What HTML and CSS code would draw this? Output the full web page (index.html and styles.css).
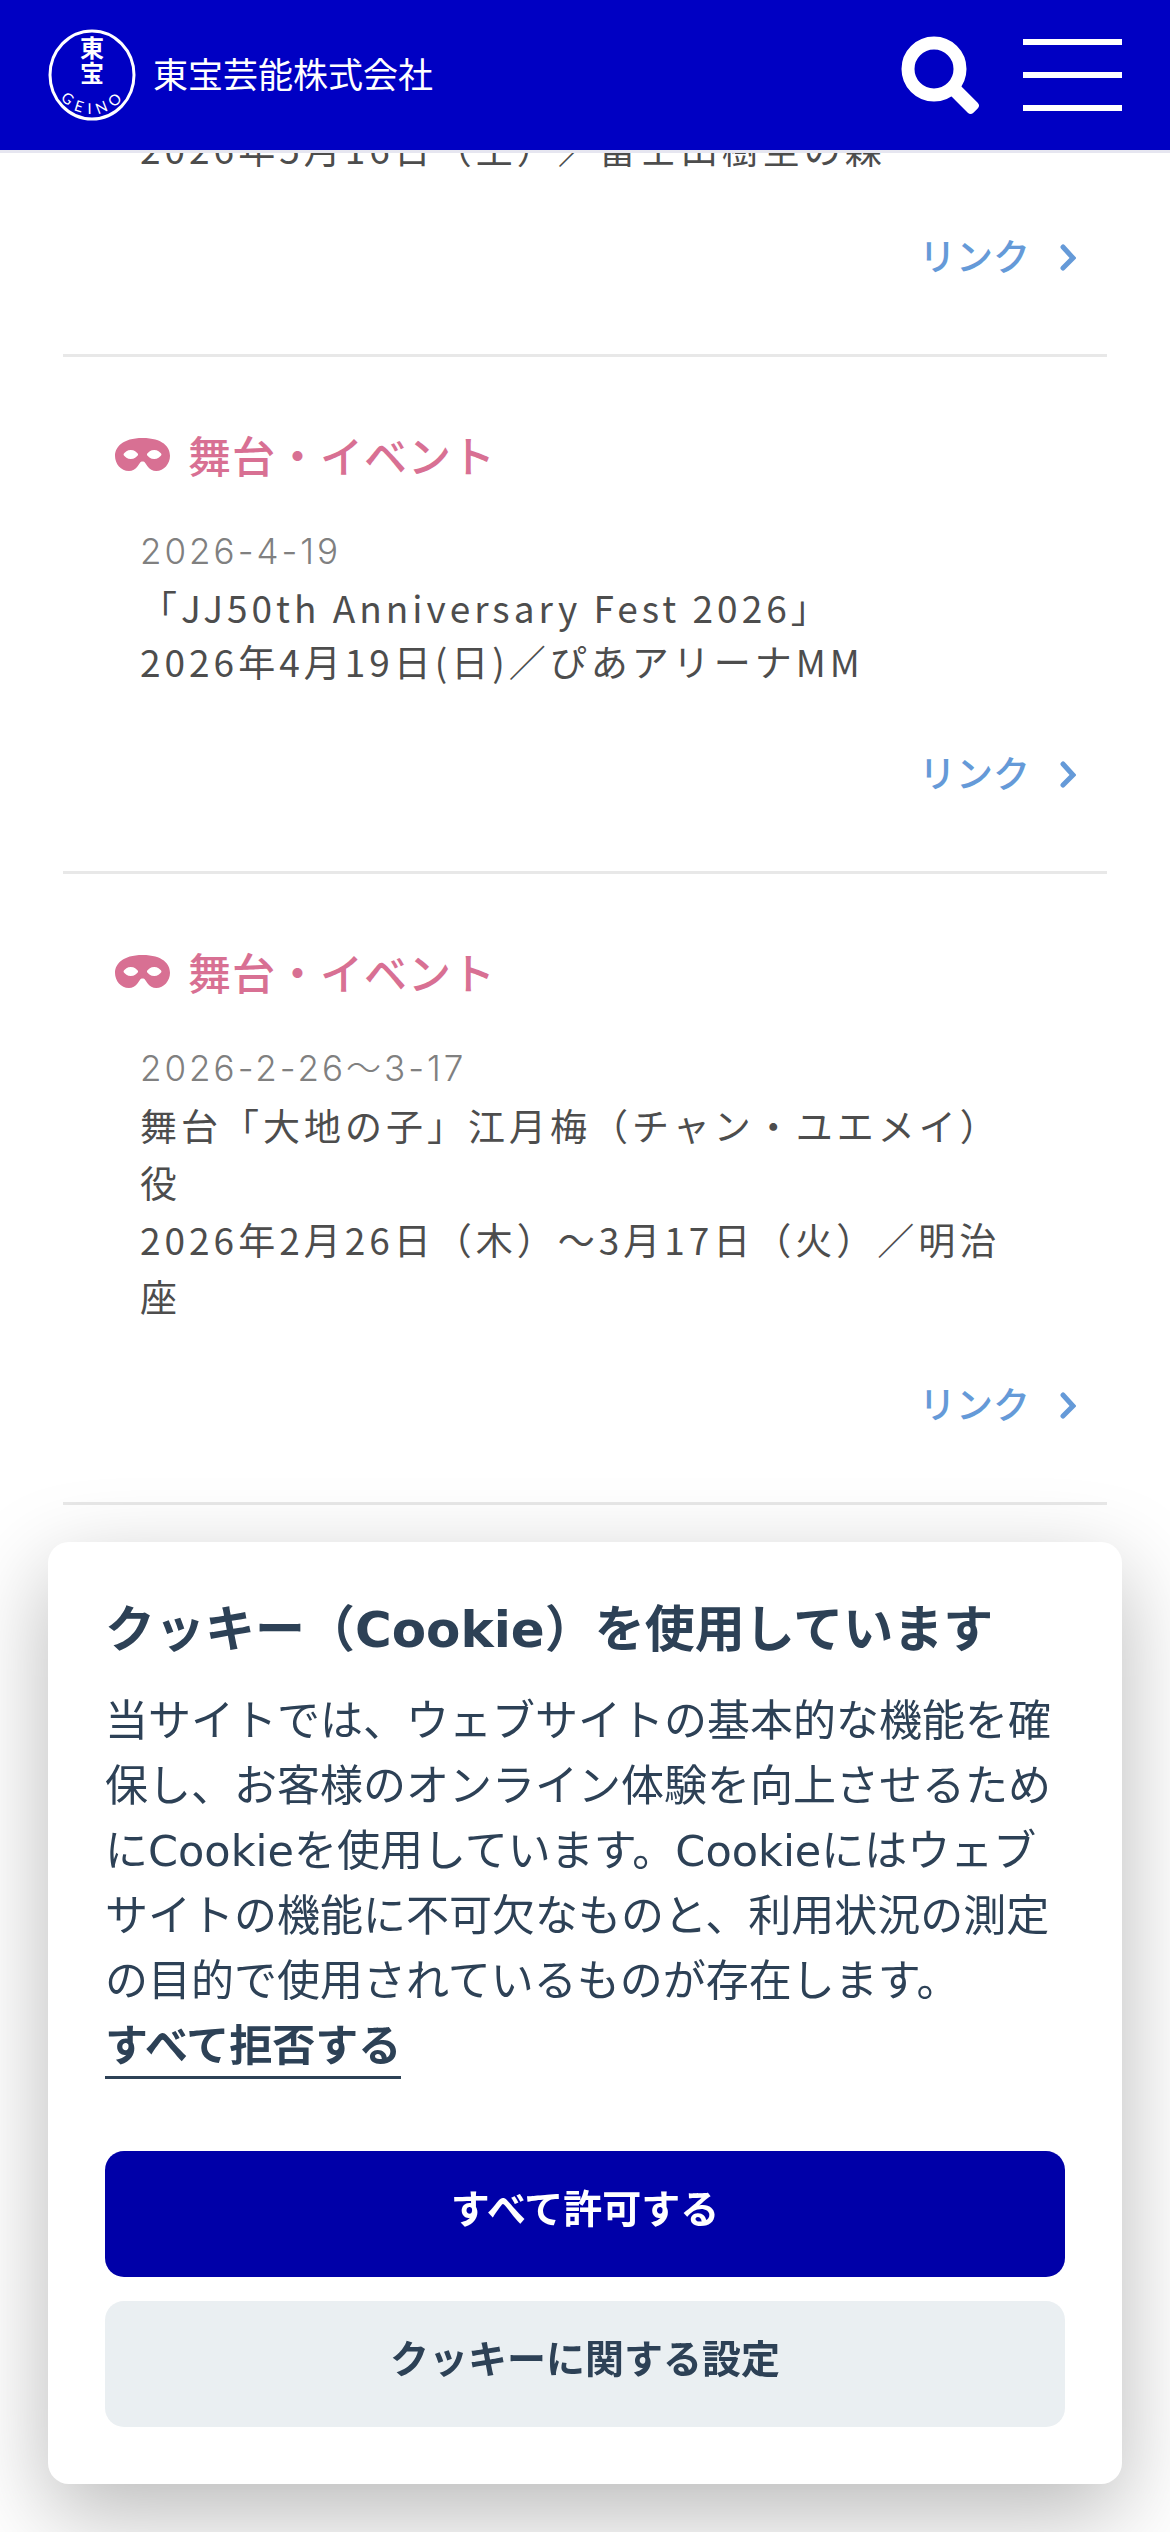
FILE: index.html
```
<!DOCTYPE html>
<html lang="ja">
<head>
<meta charset="utf-8">
<meta name="viewport" content="width=device-width, initial-scale=1">
<title>東宝芸能株式会社</title>
<link rel="stylesheet" href="styles.css">
</head>
<body>
<svg class="sprite" aria-hidden="true">
  <symbol id="mask" viewBox="0 64 640 384"><path d="M320.67 64c-442.6 0-357.57 384-158.46 384 39.9 0 77.47-20.69 101.42-55.86l25.73-37.79c15.66-22.99 46.97-22.99 62.63 0l25.73 37.79C401.66 427.31 439.23 448 479.13 448c189.86 0 290.63-384-158.46-384zM184 308.36c-41.06 0-67.76-25.66-80.08-41.05-5.23-6.53-5.23-16.09 0-22.63 12.32-15.4 39.01-41.05 80.08-41.05s67.76 25.66 80.08 41.05c5.23 6.53 5.23 16.09 0 22.63-12.32 15.4-39.02 41.05-80.08 41.05zm272 0c-41.06 0-67.76-25.66-80.08-41.05-5.23-6.53-5.23-16.09 0-22.63 12.32-15.4 39.01-41.05 80.08-41.05s67.76 25.66 80.08 41.05c5.23 6.53 5.23 16.09 0 22.63-12.32 15.4-39.02 41.05-80.08 41.05z"/></symbol>
  <symbol id="chevron" viewBox="0 0 16 28"><path d="M3 4L13 15L3 25" fill="none" stroke="currentColor" stroke-width="5" stroke-linecap="round"/></symbol>
</svg>

<header class="header">
  <a class="brand" href="#">
    <svg class="brand-mark" viewBox="0 0 88 92" role="img" aria-label="東宝 GEINO">
      <ellipse cx="44" cy="46" rx="42" ry="44" fill="none" stroke="#fff" stroke-width="3"/>
      <text class="mark-kanji" x="44" y="28" text-anchor="middle">東</text>
      <text class="mark-kanji" x="44" y="53" text-anchor="middle">宝</text>
      <path id="arc" d="M5 46A39 39 0 0 0 83 46" fill="none"/>
      <text class="mark-latin" text-anchor="middle"><textPath href="#arc" startOffset="52%">GEINO</textPath></text>
    </svg>
    <span class="brand-name">東宝芸能株式会社</span>
  </a>
  <div class="tools">
    <button class="tool" type="button" aria-label="検索">
      <svg width="80" height="80" viewBox="0 0 80 80"><circle cx="33" cy="34" r="26" fill="none" stroke="#fff" stroke-width="13"/><rect x="50" y="-7" width="32" height="14" rx="4" fill="#fff" transform="translate(1 2) rotate(45) translate(22 0)"/></svg>
    </button>
    <button class="tool menu" type="button" aria-label="メニュー"><span></span><span></span><span></span></button>
  </div>
</header>

<main class="schedule">
  <article class="entry">
    <p class="entry-text">2026年5月16日（土）／富士山樹空の森</p>
    <a class="entry-link" href="#">リンク<svg class="chevron"><use href="#chevron"/></svg></a>
  </article>
  <article class="entry">
    <h2 class="entry-title"><svg class="mask"><use href="#mask"/></svg>舞台・イベント</h2>
    <p class="entry-date">2026-4-19</p>
    <p class="entry-text entry-text-compact">「JJ50th Anniversary Fest 2026」<br>2026年4月19日(日)／ぴあアリーナMM</p>
    <a class="entry-link" href="#">リンク<svg class="chevron"><use href="#chevron"/></svg></a>
  </article>
  <article class="entry">
    <h2 class="entry-title"><svg class="mask"><use href="#mask"/></svg>舞台・イベント</h2>
    <p class="entry-date">2026-2-26～3-17</p>
    <p class="entry-text">舞台「大地の子」江月梅（チャン・ユエメイ）役<br>2026年2月26日（木）～3月17日（火）／明治座</p>
    <a class="entry-link" href="#">リンク<svg class="chevron"><use href="#chevron"/></svg></a>
  </article>
</main>

<section class="consent" role="dialog" aria-labelledby="consent-title">
  <h2 class="consent-title" id="consent-title">クッキー（Cookie）を使用しています</h2>
  <p class="consent-text">当サイトでは、ウェブサイトの基本的な機能を確保し、お客様のオンライン体験を向上させるためにCookieを使用しています。Cookieにはウェブサイトの機能に不可欠なものと、利用状況の測定の目的で使用されているものが存在します。<br><button class="consent-reject" type="button">すべて拒否する</button></p>
  <div class="consent-actions">
    <button class="consent-button consent-primary" type="button">すべて許可する</button>
    <button class="consent-button" type="button">クッキーに関する設定</button>
  </div>
</section>
</body>
</html>
```
FILE: styles.css
```
* { box-sizing: border-box; }

body {
  margin: 0;
  background: #fff;
  color: #4d4d4d;
  font-family: "Noto Sans CJK JP", sans-serif;
}

h2, p { margin: 0; }

button {
  margin: 0;
  padding: 0;
  border: 0;
  background: none;
  font: inherit;
  color: inherit;
}

.sprite { position: absolute; width: 0; height: 0; }

.header {
  position: fixed;
  top: 0;
  left: 0;
  right: 0;
  z-index: 1;
  display: flex;
  align-items: center;
  justify-content: space-between;
  height: 153px;
  padding: 0 48px;
  background: #0000c3;
  border-bottom: 3px solid #e6e6f0;
}

.brand {
  display: flex;
  align-items: center;
  gap: 17px;
  color: #fff;
  text-decoration: none;
}

.brand-mark { width: 88px; height: 92px; fill: #fff; }
.mark-kanji { font-size: 24px; font-weight: 700; }
.mark-latin { font-family: Lato, sans-serif; font-size: 15px; letter-spacing: 6px; }
.brand-name { padding-bottom: 4px; font-size: 35px; line-height: 54px; }

.tools { display: flex; align-items: center; gap: 42px; }
.tool { display: flex; }
.menu { flex-direction: column; gap: 27px; width: 99px; }
.menu span { width: 100%; height: 6px; background: #fff; }

.schedule { padding: 120px 63px 0; }

.entry {
  display: flex;
  flex-direction: column;
  padding-bottom: 72px;
  border-bottom: 3px solid #e8e8e8;
}

.entry-title {
  display: flex;
  align-items: center;
  gap: 18px;
  padding: 65px 52px 0;
  color: #d87093;
  font-size: 43px;
  font-weight: 500;
  line-height: 64px;
  letter-spacing: 1px;
}

.mask { width: 55px; height: 33px; fill: currentColor; }

.entry-date {
  margin-top: 36px;
  padding: 0 77px;
  color: #808080;
  font-family: Inter, "Noto Sans CJK JP", sans-serif;
  font-size: 35px;
  font-weight: 300;
  line-height: 58px;
  letter-spacing: 3px;
}

.entry-text {
  padding: 0 77px;
  font-size: 37px;
  line-height: 57px;
  letter-spacing: 4px;
}

.entry-text-compact { padding-bottom: 6px; line-height: 54px; }

.entry-link {
  display: flex;
  align-items: center;
  align-self: flex-end;
  gap: 30px;
  margin: 51px 31px 0 0;
  color: #659ad8;
  font-size: 37px;
  font-weight: 500;
  line-height: 54px;
  text-decoration: none;
}

.chevron { width: 16px; height: 28px; margin-top: 4px; }

.consent {
  position: fixed;
  left: 48px;
  right: 48px;
  bottom: 48px;
  z-index: 2;
  padding: 58px 57px 57px;
  border-radius: 21px;
  background: #fff;
  box-shadow: 0 30px 90px rgba(2, 2, 3, 0.28);
  color: #2d4156;
  font-family: "DejaVu Sans", "Noto Sans CJK JP", sans-serif;
}

.consent-title { font-size: 50px; font-weight: 700; line-height: 60px; }
.consent-text { margin-top: 29px; font-size: 43px; line-height: 65px; }
.consent-reject { border-bottom: 3px solid #2d4156; font-weight: 600; line-height: 60px; }

.consent-actions {
  display: flex;
  flex-direction: column;
  gap: 24px;
  margin-top: 72px;
}

.consent-button {
  height: 126px;
  padding-bottom: 16px;
  border-radius: 19px;
  background: #eaeff2;
  font-size: 39px;
  font-weight: 600;
}

.consent-primary { background: #0000a8; color: #fff; }
```
